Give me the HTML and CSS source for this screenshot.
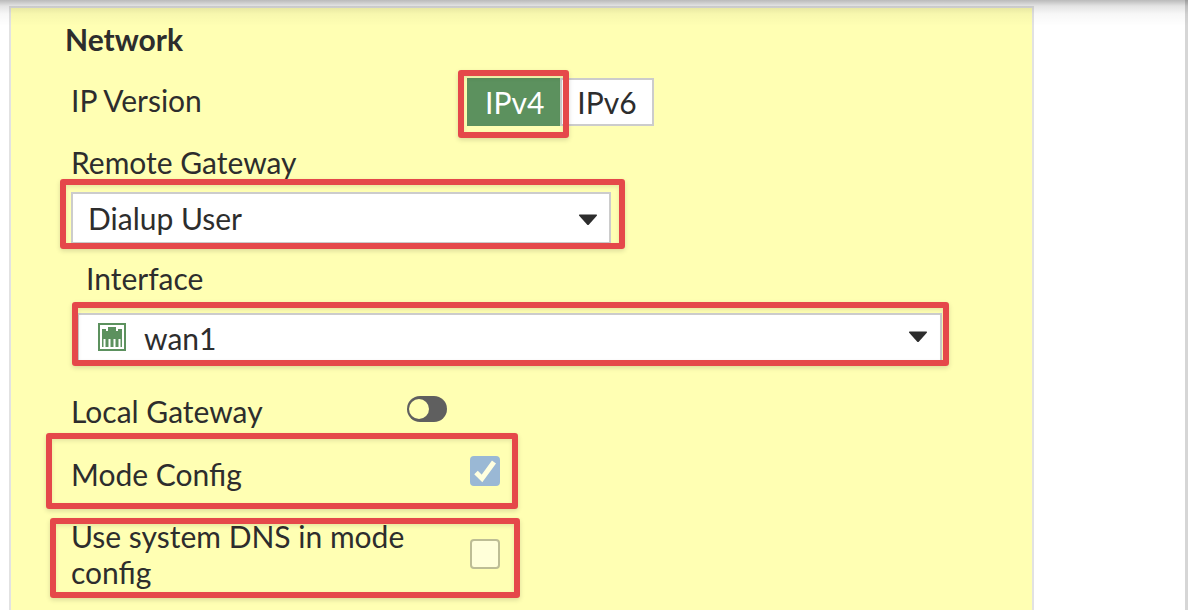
FILE: index.html
```html
<!DOCTYPE html>
<html lang="en">
<head>
<meta charset="utf-8">
<title>Network settings</title>
<meta name="viewport" content="width=device-width, initial-scale=1">
<link rel="stylesheet" href="styles.css">
</head>
<body>
<main class="page">
  <form class="panel">
    <h2 class="title">Network</h2>

    <div class="row row-version" role="group" aria-labelledby="ip-version">
      <span class="label" id="ip-version">IP Version</span>
      <div class="segmented">
        <button type="button" class="segment active" aria-pressed="true">IPv4</button>
        <button type="button" class="segment" aria-pressed="false">IPv6</button>
        <span class="highlight highlight-version"></span>
      </div>
    </div>

    <div class="field">
      <label class="label" for="gateway">Remote Gateway</label>
      <div class="select-wrap select-gateway">
        <select id="gateway" class="select"><option>Dialup User</option></select>
        <svg class="caret" viewBox="0 0 20 12" aria-hidden="true"><path d="M1.500 .5h17q1 .5.3 1.300L11 10.500q-1 1-2 0L1.200 1.800Q.5 1 1.500.5z"/></svg>
        <span class="highlight highlight-gateway"></span>
      </div>
    </div>

    <div class="field field-interface">
      <label class="label label-interface" for="interface">Interface</label>
      <div class="select-wrap select-interface">
        <select id="interface" class="select with-icon"><option>wan1</option></select>
        <svg class="port" viewBox="0 0 28 28" aria-hidden="true">
          <path class="port-frame" d="M1 1h26v26H1z"/>
          <path class="port-fill" d="M4 24V6h4v2h2V4h8v4h2V6h4v18h-1.500v-8h-2v8h-3v-8h-2v8h-3v-8h-2v8h-3v-8h-2v8z"/>
        </svg>
        <svg class="caret" viewBox="0 0 20 12" aria-hidden="true"><path d="M1.500 .5h17q1 .5.3 1.300L11 10.500q-1 1-2 0L1.200 1.800Q.5 1 1.500.5z"/></svg>
        <span class="highlight highlight-interface"></span>
      </div>
    </div>

    <div class="row row-local">
      <label class="label" for="local">Local Gateway</label>
      <input type="checkbox" role="switch" class="switch" id="local">
    </div>

    <div class="row row-mode">
      <label class="label" for="mode">Mode Config</label>
      <span class="check-wrap">
        <input type="checkbox" class="check" id="mode" checked>
        <svg class="tick" viewBox="0 0 30 30" aria-hidden="true"><path d="M6 16.500l6 6L24 6"/></svg>
      </span>
      <span class="highlight highlight-mode"></span>
    </div>

    <div class="row row-dns">
      <label class="label" for="dns">Use system DNS in mode config</label>
      <span class="check-wrap">
        <input type="checkbox" class="check" id="dns">
      </span>
      <span class="highlight highlight-dns"></span>
    </div>
  </form>
</main>
</body>
</html>
```
FILE: styles.css
```css
* {
  box-sizing: border-box;
}

body {
  margin: 0;
  background: #fff;
  color: #2d2d2d;
  font: 30px/36px Lato, "Liberation Sans", sans-serif;
}

.page {
  position: relative;
  display: flex;
  min-height: 100vh;
  padding: 6px 12px 0 9px;
  border-right: 3px solid #d6d6d6;
}

.page::before {
  content: "";
  position: absolute;
  inset: 0 -3px auto 0;
  height: 26px;
  background: linear-gradient(rgba(0, 0, 0, .27), rgba(0, 0, 0, .11) 6px, rgba(0, 0, 0, .03) 14px, transparent);
  pointer-events: none;
}

.panel {
  flex: 1;
  max-width: 1025px;
  padding: 13px 90px 12px 60px;
  border: 2px solid #e2e2e2;
  border-bottom: 0;
  background: #ffffb3;
}

.title {
  margin: 0 0 0 -6px;
  font-size: 30px;
  line-height: 36px;
  font-weight: 700;
}

.row {
  position: relative;
  display: flex;
}

.row .label {
  flex: 0 0 336px;
}

.label {
  display: block;
}

.row-version {
  align-items: center;
  margin-top: 21px;
}

.row-version .label {
  margin-bottom: 4px;
}

.segmented {
  position: relative;
  display: flex;
  margin-left: 60px;
}

.segment {
  height: 48px;
  padding: 0 15px;
  border: 2px solid #ccc;
  background: #fff;
  color: inherit;
  font: inherit;
}

.segment.active {
  padding: 0 16px;
  border-color: #5c915e;
  border-right: 0;
  background: #5c915e;
  color: #fff;
}

.field {
  margin-top: 18px;
}

.field-interface {
  margin-top: 16px;
}

.select-wrap {
  position: relative;
  margin-top: 12px;
}

.select {
  display: block;
  width: 100%;
  height: 52px;
  padding: 0 48px 0 15px;
  border: 2px solid #ccc;
  border-radius: 0;
  appearance: none;
  background: #fff;
  color: inherit;
  font: inherit;
}

.select-gateway {
  max-width: 540px;
}

.label-interface {
  margin-left: 15px;
}

.select-interface {
  max-width: 865px;
  margin: 17px 0 0 6px;
}

.with-icon {
  height: 50px;
  padding-left: 65px;
}

.caret {
  position: absolute;
  top: 22px;
  right: 13px;
  width: 20px;
  height: 12px;
  fill: #2d2d2d;
  pointer-events: none;
}

.select-interface .caret {
  top: 18px;
  right: 14px;
}

.port {
  position: absolute;
  top: 10px;
  left: 21px;
  width: 28px;
  height: 28px;
  pointer-events: none;
}

.port-frame {
  fill: #fff;
  stroke: #5c915e;
  stroke-width: 2;
}

.port-fill {
  fill: #5c915e;
}

.row-local {
  align-items: center;
  margin-top: 30px;
}

.switch {
  position: relative;
  width: 40px;
  height: 26px;
  margin: 0 0 4px;
  border-radius: 13px;
  appearance: none;
  background: #5f5f5f;
}

.switch::before {
  content: "";
  position: absolute;
  top: 3px;
  left: 2px;
  width: 20px;
  height: 20px;
  border-radius: 50%;
  background: #ffffb3;
}

.row-mode {
  margin-top: 27px;
}

.row-dns {
  align-items: center;
  margin-top: 26px;
}

.check-wrap {
  position: relative;
  width: 30px;
  height: 30px;
  margin-left: 63px;
}

.check {
  display: block;
  width: 30px;
  height: 30px;
  margin: 0;
  border: 2px solid #bdbd95;
  border-radius: 4px;
  appearance: none;
  background: #ffffd9;
}

.check:checked {
  border-color: #9ab8d5;
  background: #9ab8d5;
}

.tick {
  position: absolute;
  inset: 0;
  fill: none;
  stroke: #ffffdf;
  stroke-width: 5;
  pointer-events: none;
}

/* Callout frames drawn over the settings they point to */
.highlight {
  position: absolute;
  border: 6px solid #e5484a;
  border-radius: 3px;
  box-shadow: 0 2px 5px rgba(0, 0, 0, .14), inset 0 2px 4px rgba(0, 0, 0, .1);
  pointer-events: none;
}

.highlight-version {
  inset: -8px 85px -12px -9px;
}

.highlight-gateway {
  inset: -13px -14px -5px -11px;
}

.highlight-interface {
  inset: -11px -7px -3px -5px;
}

.highlight-mode {
  top: -23px;
  bottom: -17px;
  left: -25px;
  width: 472px;
}

.highlight-dns {
  top: 0;
  bottom: -8px;
  left: -21px;
  width: 470px;
}
```
